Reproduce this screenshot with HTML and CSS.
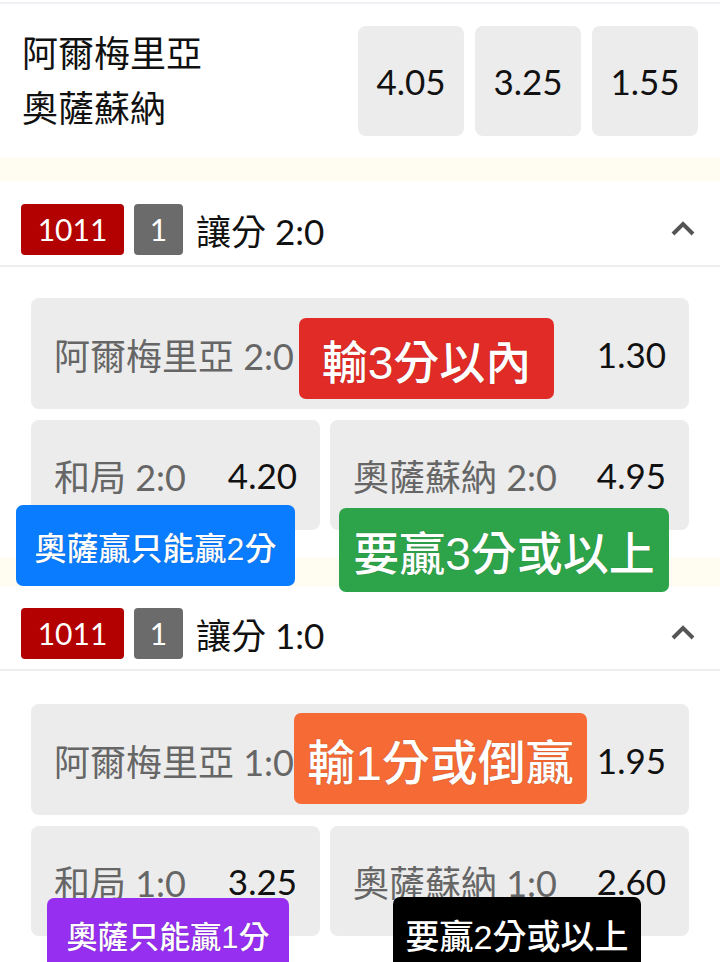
FILE: index.html
```html
<!DOCTYPE html>
<html lang="zh-Hant">
<head>
    <meta charset="UTF-8">
    <meta name="viewport" content="width=device-width, initial-scale=1.0">
    <title>讓分</title>
    <link rel="stylesheet" href="styles.css">
</head>
<body>
    <div class="match">
        <div class="teams">
            <div>阿爾梅里亞</div>
            <div>奧薩蘇納</div>
        </div>
        <div class="odds">
            <div class="odd">4.05</div>
            <div class="odd">3.25</div>
            <div class="odd">1.55</div>
        </div>
    </div>

    <div class="spacer"></div>

    <div class="market">
        <div class="market-head">
            <span class="badge badge-id">1011</span>
            <span class="badge badge-no">1</span>
            <span class="market-title">讓分 2:0</span>
            <svg class="chevron" width="24" height="16" viewBox="0 0 24 16">
                <polyline points="2,13 12,3 22,13" fill="none" stroke="#555" stroke-width="4"/>
            </svg>
        </div>
        <div class="market-body">
            <div class="sel sel-wide">
                <span class="sel-name">阿爾梅里亞 2:0</span>
                <span class="sel-odd">1.30</span>
            </div>
            <div class="sel-row">
                <div class="sel sel-draw">
                    <span class="sel-name">和局 2:0</span>
                    <span class="sel-odd">4.20</span>
                </div>
                <div class="sel sel-away">
                    <span class="sel-name">奧薩蘇納 2:0</span>
                    <span class="sel-odd">4.95</span>
                </div>
            </div>

            <div class="note note-red">輸3分以內</div>
            <div class="note note-blue">奧薩贏只能贏2分</div>
            <div class="note note-green">要贏3分或以上</div>
        </div>
    </div>

    <div class="spacer"></div>

    <div class="market">
        <div class="market-head">
            <span class="badge badge-id">1011</span>
            <span class="badge badge-no">1</span>
            <span class="market-title">讓分 1:0</span>
            <svg class="chevron" width="24" height="16" viewBox="0 0 24 16">
                <polyline points="2,13 12,3 22,13" fill="none" stroke="#555" stroke-width="4"/>
            </svg>
        </div>
        <div class="market-body">
            <div class="sel sel-wide">
                <span class="sel-name">阿爾梅里亞 1:0</span>
                <span class="sel-odd">1.95</span>
            </div>
            <div class="sel-row">
                <div class="sel sel-draw">
                    <span class="sel-name">和局 1:0</span>
                    <span class="sel-odd">3.25</span>
                </div>
                <div class="sel sel-away">
                    <span class="sel-name">奧薩蘇納 1:0</span>
                    <span class="sel-odd">2.60</span>
                </div>
            </div>

            <div class="note note-orange">輸1分或倒贏</div>
            <div class="note note-purple">奧薩只能贏1分</div>
            <div class="note note-black">要贏2分或以上</div>
        </div>
    </div>
</body>
</html>
```

FILE: styles.css
```css
body {
    margin: 0;
    background: #fff;
    font-family: Lato, "Noto Sans CJK TC", sans-serif;
    color: #111;
    overflow: hidden;
}

/* top match card */
.match {
    margin-top: 2px;
    border-top: 2px solid #eef0f3;
    padding: 22px;
    display: flex;
    justify-content: space-between;
    align-items: center;
}
.teams {
    font-size: 36px;
    line-height: 55px;
}
.odds {
    display: flex;
    gap: 11px;
}
.odd {
    width: 106px;
    height: 110px;
    border-radius: 8px;
    background: #ececec;
    display: flex;
    align-items: center;
    justify-content: center;
    font-size: 35px;
}

.spacer {
    height: 24px;
    background: #fffcf2;
}
.market + .spacer {
    height: 28px;
}

/* market header */
.market-head {
    height: 85px;
    box-sizing: border-box;
    border-bottom: 2px solid #eeeeee;
    display: flex;
    align-items: center;
    padding: 11px 25px 0 21px;
}
.badge {
    height: 51px;
    border-radius: 4px;
    color: #fff;
    font-size: 30px;
    display: flex;
    align-items: center;
    justify-content: center;
}
.badge-id {
    width: 103px;
    background: #b30000;
}
.badge-no {
    width: 49px;
    margin-left: 10px;
    background: #6b6b6b;
}
.market-title {
    margin-left: 13px;
    font-size: 35px;
}
.chevron {
    margin-left: auto;
}

/* selections */
.market-body {
    position: relative;
    padding: 31px 31px 28px 31px;
    display: flex;
    flex-direction: column;
    gap: 11px;
}
.market + .spacer + .market .market-body {
    padding-top: 33px;
}
.sel-row {
    display: flex;
    gap: 10px;
}
.sel {
    background: #ececec;
    border-radius: 8px;
    height: 110px;
    display: flex;
    align-items: center;
    justify-content: space-between;
    padding: 0 23px;
    box-sizing: border-box;
    font-size: 36px;
}
.sel-wide {
    height: 111px;
}
.sel-draw {
    width: 289px;
}
.sel-away {
    flex: 1;
}
.sel-name {
    color: #666;
}
.sel-odd {
    color: #111;
    font-size: 35px;
}

/* annotation labels laid over the board */
.note {
    position: absolute;
    display: flex;
    align-items: center;
    justify-content: center;
    border-radius: 7px;
    color: #fff;
    font-family: "Liberation Sans", "Noto Sans CJK TC", sans-serif;
    font-weight: 500;
    white-space: nowrap;
    text-shadow: 0 0 1px rgba(0, 0, 0, 0.35);
}
.note-red {
    left: 299px;
    top: 51px;
    width: 255px;
    height: 81px;
    background: #e02b27;
    font-size: 46px;
}
.note-blue {
    left: 16px;
    top: 238px;
    width: 279px;
    height: 81px;
    background: #0a7cff;
    font-size: 32px;
}
.note-green {
    left: 339px;
    top: 241px;
    width: 330px;
    height: 84px;
    background: #2ea44a;
    font-size: 46px;
}
.note-orange {
    left: 294px;
    top: 42px;
    width: 293px;
    height: 91px;
    background: #f56a35;
    font-size: 48px;
}
.note-purple {
    left: 47px;
    top: 227px;
    width: 242px;
    height: 84px;
    background: #962ff0;
    font-size: 31px;
    align-items: flex-start;
    padding-top: 14px;
    box-sizing: border-box;
}
.note-black {
    left: 393px;
    top: 226px;
    width: 248px;
    height: 84px;
    background: #000;
    font-size: 34px;
    align-items: flex-start;
    padding-top: 13px;
    box-sizing: border-box;
}
```
